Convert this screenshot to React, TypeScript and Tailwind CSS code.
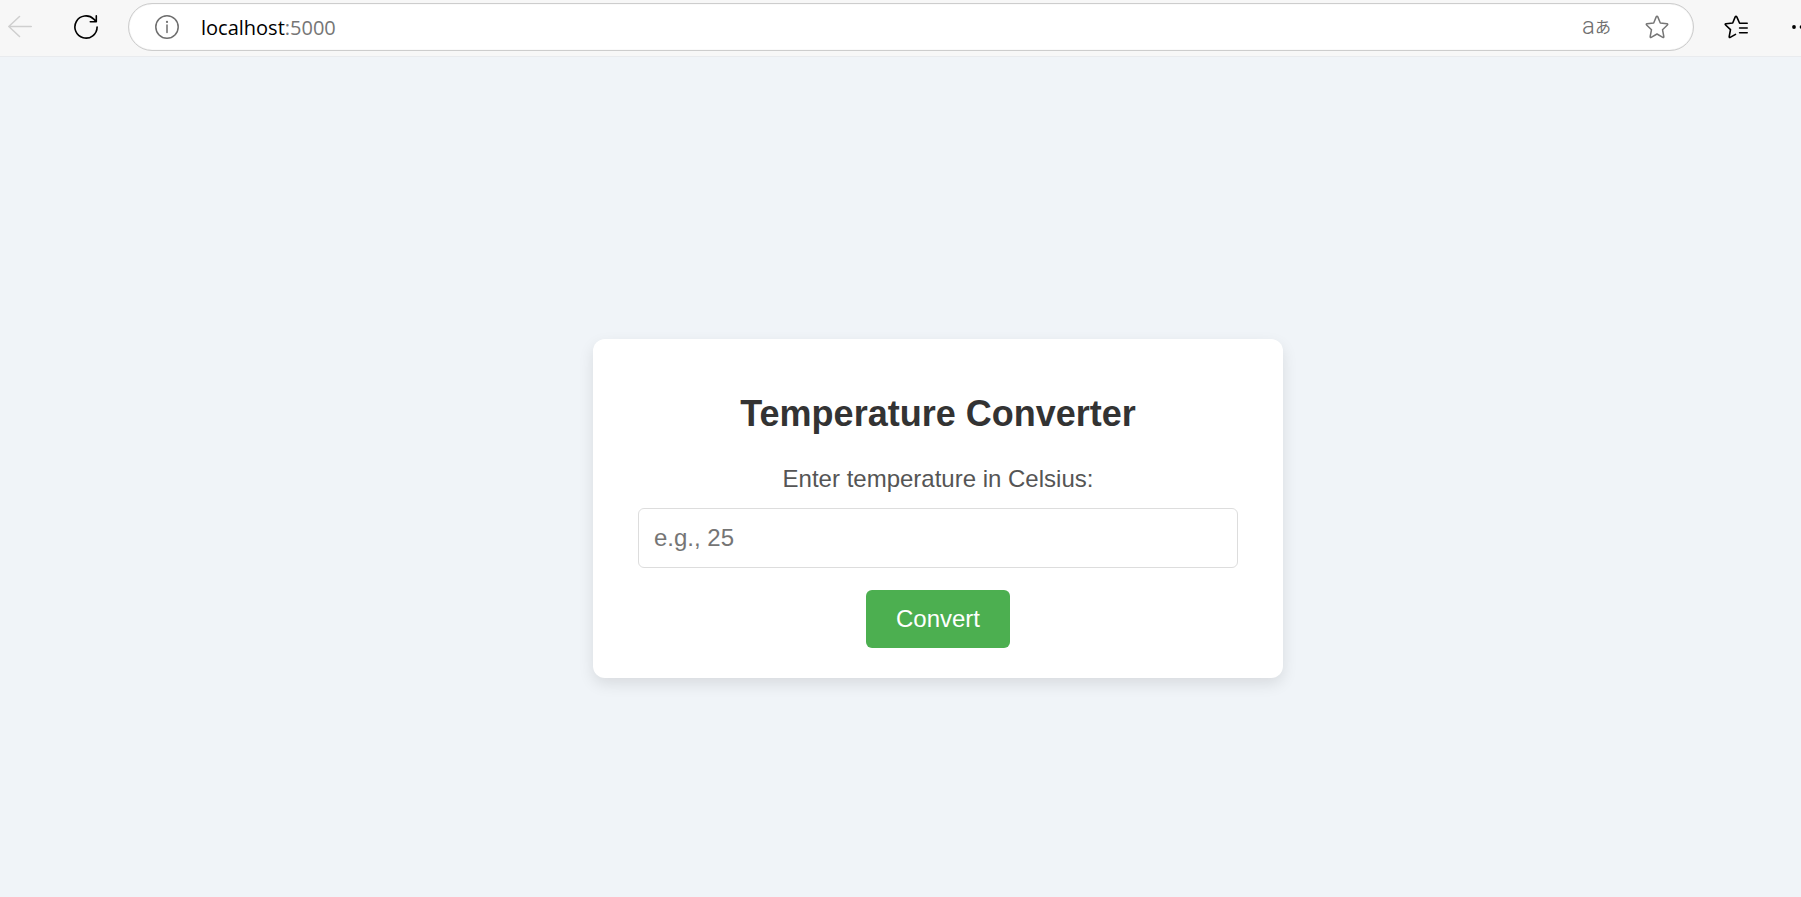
import React, { useState } from "react";

const STAR =
  "M12 1.2 Q12.5 1.2 12.8 1.9 L15.3 8 L22 8.8 Q23.2 9.1 22.4 10 L17.5 14.7 L18.8 21.5 Q18.9 22.8 17.8 22.3 L12 19 L6.2 22.3 Q5.1 22.8 5.2 21.5 L6.5 14.7 L1.6 10 Q.8 9.1 2 8.8 L8.7 8 L11.2 1.9 Q11.5 1.2 12 1.2 Z";

function BackIcon() {
  return (
    <svg viewBox="0 0 24 24" className="size-6" fill="none" stroke="currentColor" strokeWidth="1.5" strokeLinecap="round" strokeLinejoin="round" aria-hidden="true">
      <path d="M23.3 11.5H1M11.5 1.5L.8 11.5l10.7 10" />
    </svg>
  );
}

function ReloadIcon() {
  return (
    <svg viewBox="0 0 24 24" className="size-6" fill="none" stroke="currentColor" strokeWidth="1.6" strokeLinecap="round" strokeLinejoin="round" aria-hidden="true">
      <path d="M23.1 12A11.1 11.1 0 1 1 19.8 4.1L22.2 6.6M22.3 .9v5.9h-6" />
    </svg>
  );
}

function InfoIcon() {
  return (
    <svg viewBox="0 0 24 24" className="size-6" fill="none" stroke="currentColor" strokeWidth="1.5" aria-hidden="true">
      <circle cx="12" cy="12" r="11.2" />
      <path d="M12 10v7.6" strokeLinecap="round" />
      <circle cx="12" cy="6.9" r="1.1" fill="currentColor" stroke="none" />
    </svg>
  );
}

function StarIcon() {
  return (
    <svg viewBox="0 0 24 24" className="size-6" fill="none" stroke="currentColor" strokeWidth="1.5" strokeLinejoin="round" aria-hidden="true">
      <path d={STAR} />
    </svg>
  );
}

function FavoritesIcon() {
  return (
    <svg viewBox="0 0 24 24" className="size-6" fill="none" stroke="currentColor" strokeWidth="1.6" strokeLinecap="round" strokeLinejoin="round" aria-hidden="true">
      <path d="M23.2 8.2H15.6L12.8 1.9Q12 .7 11.2 1.9L8.7 8 2 8.8Q.6 9.1 1.6 10L6.5 14.7 5.2 21.7Q5.2 22.9 6.2 22.4L11.5 19.4" />
      <path d="M15.6 13h7.6M15.6 17.8h7.6" />
    </svg>
  );
}

function MoreIcon() {
  return (
    <svg viewBox="0 0 24 24" className="size-6 shrink-0" fill="currentColor" aria-hidden="true">
      <circle cx="2" cy="12" r="1.9" />
      <circle cx="9.6" cy="12" r="1.9" />
      <circle cx="17.2" cy="12" r="1.9" />
    </svg>
  );
}

function Toolbar() {
  return (
    <header className="flex h-[57px] items-start border-b border-[#e9ebee] bg-[#f7f7f7] pt-[3px] pl-2 text-black">
      <div className="flex h-12 items-center gap-[42px] pr-[30px]">
        <button type="button" aria-label="Back" disabled className="text-[#cfcfcf]">
          <BackIcon />
        </button>
        <button type="button" aria-label="Refresh">
          <ReloadIcon />
        </button>
      </div>
      <div className="flex h-12 min-w-0 flex-1 items-center rounded-full border border-[#cdcdcd] bg-white pr-6 pl-[26px] text-[#6e6e6e] shadow-[inset_0_0_1px_#cdcdcd]">
        <button type="button" aria-label="View site information">
          <InfoIcon />
        </button>
        <div className="min-w-0 flex-1 pt-0.5 pl-[22px] font-['Open_Sans',sans-serif] text-[20px] leading-7 text-[#767676]">
          <span className="text-black">localhost</span>:5000
        </div>
        <button type="button" aria-label="Translate" className="mr-[34px] flex items-center pb-0.5 text-[#707070]">
          <span className="font-['Roboto',sans-serif] text-[24px] leading-6 font-light">a</span>
          <span className="font-['Noto_Sans_CJK_JP',sans-serif] text-[16px] leading-6">あ</span>
        </button>
        <button type="button" aria-label="Add to favorites" className="text-[#767676]">
          <StarIcon />
        </button>
      </div>
      <div className="flex h-12 items-center gap-11 pl-[30px]">
        <button type="button" aria-label="Favorites">
          <FavoritesIcon />
        </button>
        <button type="button" aria-label="Settings and more" className="flex w-[9px] overflow-hidden">
          <MoreIcon />
        </button>
      </div>
    </header>
  );
}

function Converter() {
  const [value, setValue] = useState("");
  const [result, setResult] = useState<string | null>(null);

  const convert = (event: React.FormEvent) => {
    event.preventDefault();
    const celsius = Number(value);
    if (value.trim() !== "" && !Number.isNaN(celsius)) {
      setResult(`${celsius}°C = ${((celsius * 9) / 5 + 32).toFixed(2)}°F`);
    }
  };

  return (
    <form
      onSubmit={convert}
      className="flex w-full max-w-[690px] flex-col items-center rounded-xl bg-white px-[45px] pt-[54px] pb-[30px] text-2xl shadow-[0_6px_15px_rgba(0,0,0,0.1)]"
    >
      <h1 className="text-4xl leading-[42px] font-bold text-[#333]">Temperature Converter</h1>
      <label htmlFor="celsius" className="mt-[30px] leading-7 text-[#555]">
        Enter temperature in Celsius:
      </label>
      <input
        id="celsius"
        type="text"
        inputMode="decimal"
        placeholder="e.g., 25"
        value={value}
        onChange={(event) => setValue(event.target.value)}
        className="mt-[15px] h-[60px] w-full rounded-md border border-[#ddd] px-[15px] text-black placeholder:text-[#757575]"
      />
      <button type="submit" className="mt-[22px] h-[58px] rounded-md bg-[#4caf50] px-[30px] text-white">
        Convert
      </button>
      {result && <p className="mt-4 text-[#333]">{result}</p>}
    </form>
  );
}

export default function App() {
  return (
    <div className="flex min-h-screen flex-col bg-[#f0f4f8] font-['Liberation_Sans',Arial,sans-serif]">
      <Toolbar />
      <main className="flex flex-1 items-center justify-center pt-[63px] pl-[75px]">
        <Converter />
      </main>
    </div>
  );
}
